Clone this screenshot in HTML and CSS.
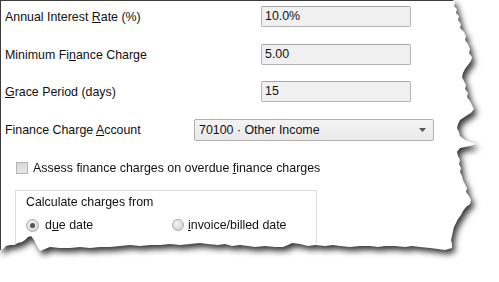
FILE: index.html
```html
<!DOCTYPE html>
<html>
<head>
<meta charset="utf-8">
<link rel="stylesheet" href="styles.css">
</head>
<body>
<div class="shadow">
  <div class="sheet">
    <div class="field first">
      <span class="label">Annual Interest <u>R</u>ate (%)</span>
      <div class="input">10.0%</div>
    </div>
    <div class="field second">
      <span class="label">Minimum Fi<u>n</u>ance Charge</span>
      <div class="input">5.00</div>
    </div>
    <div class="field third">
      <span class="label"><u>G</u>race Period (days)</span>
      <div class="input">15</div>
    </div>
    <div class="account">
      <span class="label-acc">Finance Charge <u>A</u>ccount</span>
      <div class="select">
        <span>70100 · Other Income</span>
        <svg class="arrow" width="7" height="4" viewBox="0 0 7 4"><path d="M0 0H7L3.5 4Z" fill="#555"/></svg>
      </div>
    </div>
    <div class="check-row">
      <span class="checkbox"></span>
      <span>Assess finance charges on overdue <u>f</u>inance charges</span>
    </div>
    <div class="group">
      <div class="group-title">Calculate charges from</div>
      <div class="radios">
        <div class="opt"><span class="radio checked"></span><span>d<u>u</u>e date</span></div>
        <div class="opt"><span class="radio"></span><span><u>i</u>nvoice/billed date</span></div>
      </div>
    </div>
  </div>
</div>
</body>
</html>
```

FILE: styles.css
```css
html, body {
  margin: 0;
  padding: 0;
  background: #fff;
}
body {
  width: 499px;
  height: 282px;
  overflow: hidden;
  font-family: "Liberation Sans", Arial, sans-serif;
  font-size: 12.4px;
  color: #111;
}
u { text-decoration: underline; text-underline-offset: 1px; }

.shadow {
  width: 499px;
  height: 282px;
  filter: drop-shadow(3px 4px 3px rgba(0,0,0,0.8));
}
.sheet {
  box-sizing: border-box;
  width: 499px;
  height: 282px;
  background: #fff;
  border-top: 1px solid #3c3c3c;
  border-left: 1px solid #3c3c3c;
  padding: 5px 0 0 4px;
  clip-path: polygon(
    0 0, 453px 0, 455px 3px, 454px 6px, 457px 9px, 456px 13px, 459px 16px, 458px 20px,
    461px 24px, 460px 28px, 464px 32px, 466px 36px, 465px 40px, 468px 44px, 470px 49px,
    469px 53px, 472px 57px, 471px 61px, 468px 65px, 465px 69px, 463px 73px, 462px 77px,
    464px 81px, 466px 85px, 465px 89px, 468px 93px, 467px 97px, 470px 101px, 472px 105px,
    474px 109px, 471px 113px, 466px 116px, 460px 120px, 458px 124px, 457px 128px,
    459px 132px, 460px 136px, 465px 140px, 476px 144px, 470px 146px, 460px 148px,
    457px 152px, 458px 156px, 460px 160px, 459px 164px, 461px 168px, 460px 172px,
    462px 176px, 463px 180px, 465px 184px, 467px 188px, 466px 192px, 469px 196px,
    471px 200px, 470px 204px, 466px 207px, 463px 211px, 461px 215px, 458px 219px,
    456px 223px, 454px 227px, 453px 231px, 452px 236px, 451px 240px, 452px 244px,
    452px 248px, 445px 250px, 438px 249px, 430px 248px, 420px 247px, 412px 246px,
    405px 247px, 395px 246px, 385px 246px, 378px 247px, 370px 246px, 360px 246px,
    350px 247px, 340px 246px, 333px 245px, 325px 246px, 315px 245px, 308px 246px,
    300px 244px, 292px 243px, 288px 245px, 283px 247px, 275px 247px, 265px 246px,
    255px 247px, 248px 246px, 240px 245px, 232px 246px, 225px 244px, 218px 245px,
    208px 244px, 200px 243px, 190px 244px, 180px 245px, 170px 244px, 160px 245px,
    150px 245px, 140px 246px, 130px 245px, 120px 246px, 110px 247px, 100px 247px,
    90px 248px, 80px 247px, 70px 248px, 60px 248px, 50px 247px, 45px 249px,
    40px 251px, 37px 246px, 34px 240px, 31px 236px, 28px 237px, 25px 240px,
    22px 242px, 18px 243px, 14px 245px, 10px 245px, 6px 246px, 3px 249px, 0 250px
  );
}

.field {
  display: flex;
  align-items: center;
  height: 21px;
}
.field.second { margin-top: 17px; }
.field.third { margin-top: 16px; }
.label {
  width: 256px;
  flex: none;
}
.input {
  box-sizing: border-box;
  width: 150px;
  height: 21px;
  background: #f0f0f0;
  border: 1px solid #b3b3b3;
  border-top-color: #a6a6a6;
  border-radius: 2px;
  padding: 0 0 0 3px;
  line-height: 19px;
}

.account {
  display: flex;
  align-items: center;
  height: 21px;
  margin-top: 17px;
}
.label-acc {
  width: 189px;
  flex: none;
}
.select {
  box-sizing: border-box;
  width: 240px;
  height: 22px;
  border: 1px solid #b0b0b0;
  border-radius: 2px;
  background: linear-gradient(#f4f4f4, #e9e9e9);
  display: flex;
  align-items: center;
  justify-content: space-between;
  padding: 0 7px 0 4px;
}
.arrow { display: block; }

.check-row {
  display: flex;
  align-items: center;
  margin-top: 21px;
  margin-left: 11px;
  height: 14px;
}
.checkbox {
  box-sizing: border-box;
  width: 12px;
  height: 12px;
  border: 1px solid #b5b5b5;
  background: linear-gradient(#d8d8d8, #e6e6e6);
  margin-right: 5px;
  flex: none;
}

.group {
  box-sizing: border-box;
  width: 302px;
  height: 80px;
  margin-top: 15px;
  margin-left: 10px;
  border: 1px solid #dddddd;
  padding: 4px 0 0 10px;
}
.group-title {
  line-height: 14px;
}
.radios {
  display: grid;
  grid-template-columns: 146px auto;
  margin-top: 9px;
}
.opt {
  display: flex;
  align-items: center;
  height: 14px;
}
.radio {
  box-sizing: border-box;
  position: relative;
  width: 13px;
  height: 13px;
  border-radius: 50%;
  border: 1px solid #a8a8a8;
  background: radial-gradient(circle at 40% 35%, #f2f2f2, #cfcfcf);
  margin-right: 6px;
  flex: none;
}
.opt + .opt .radio { width: 12px; height: 12px; margin-right: 4px; }
.radio.checked::after {
  content: "";
  position: absolute;
  left: 3px;
  top: 3px;
  width: 5px;
  height: 5px;
  border-radius: 50%;
  background: #555;
}
```
